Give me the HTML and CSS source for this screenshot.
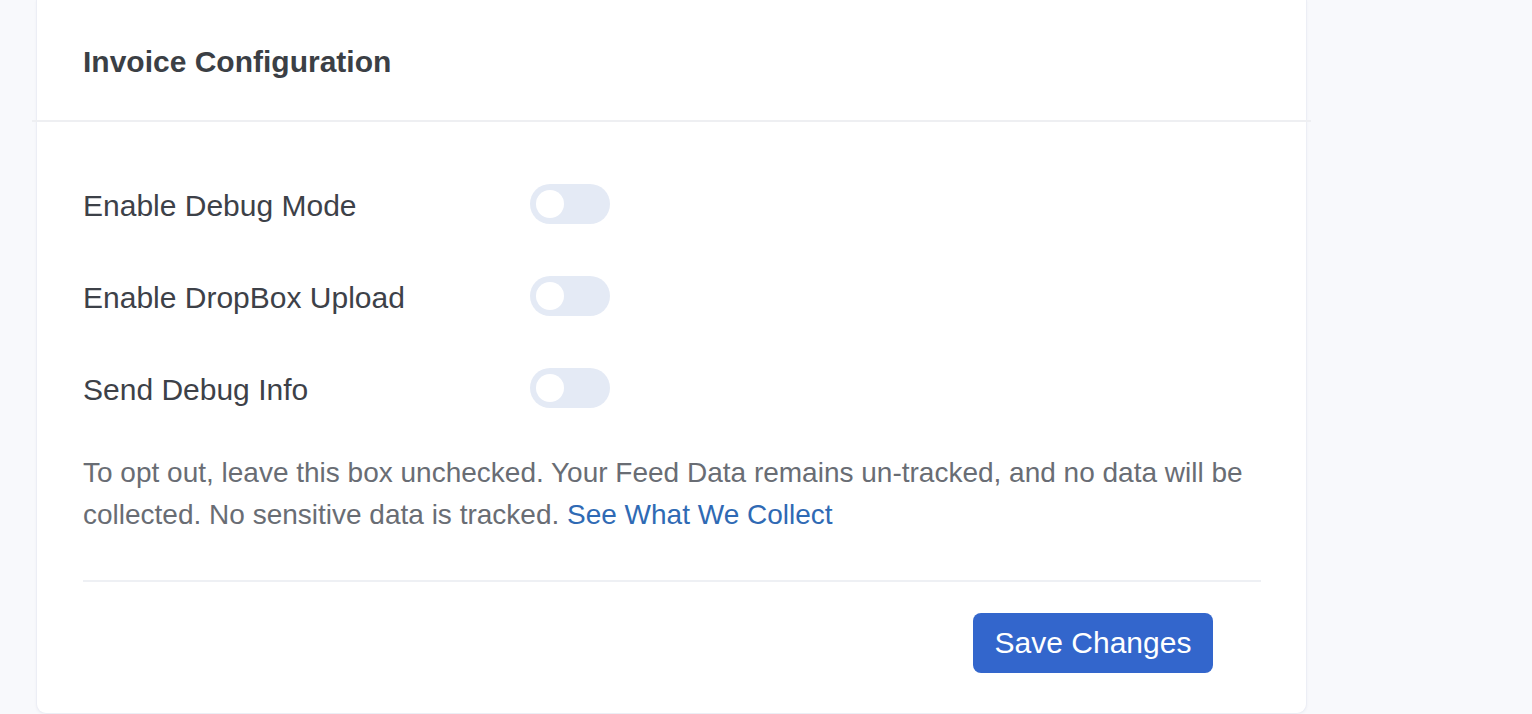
FILE: index.html
```html
<!DOCTYPE html>
<html lang="en">
<head>
<meta charset="utf-8">
<title>Invoice Configuration</title>
<link rel="stylesheet" href="styles.css">
</head>
<body>
<div class="page">
  <section class="card">
    <header class="card-header">
      <h2 class="card-title">Invoice Configuration</h2>
    </header>
    <div class="card-body">
      <div class="settings">
        <div class="setting-row">
          <span class="setting-label">Enable Debug Mode</span>
          <span class="toggle"><span class="knob"></span></span>
        </div>
        <div class="setting-row">
          <span class="setting-label">Enable DropBox Upload</span>
          <span class="toggle"><span class="knob"></span></span>
        </div>
        <div class="setting-row">
          <span class="setting-label">Send Debug Info</span>
          <span class="toggle"><span class="knob"></span></span>
        </div>
      </div>
      <p class="note">To opt out, leave this box unchecked. Your Feed Data remains un-tracked, and no data will be collected. No sensitive data is tracked. <a class="link" href="#">See What We Collect</a></p>
      <div class="footer">
        <button class="btn-primary" type="button">Save Changes</button>
      </div>
    </div>
  </section>
</div>
</body>
</html>
```

FILE: styles.css
```css
html, body {
  margin: 0;
  padding: 0;
  background: #f8f9fc;
  font-family: "Liberation Sans", Arial, Helvetica, sans-serif;
}
.page {
  padding: 0 225px 0 36px;
  height: 714px;
  box-sizing: border-box;
  overflow: hidden;
}
.card {
  background: #ffffff;
  border: 1px solid #eceef5;
  border-top: none;
  border-radius: 0 0 10px 10px;
  box-shadow: 0 1px 3px rgba(30, 40, 80, 0.04);
  height: 714px;
  box-sizing: border-box;
}
.card-header {
  height: 120px;
  display: flex;
  align-items: center;
  border-bottom: 2px solid #eeeff2;
  margin: 0 -5px;
  padding: 0 46px 0 51px;
}
.card-title {
  margin: 0;
  padding-top: 4px;
  font-size: 30px;
  font-weight: 700;
  color: #3b3f45;
  line-height: 36px;
}
.card-body {
  padding: 62px 45px 0 46px;
}
.settings {
  display: flex;
  flex-direction: column;
  gap: 52px;
}
.setting-row {
  display: flex;
  align-items: center;
  height: 40px;
}
.setting-label {
  width: 447px;
  font-size: 30px;
  color: #3d4148;
  line-height: 40px;
  padding-top: 4px;
}
.toggle {
  width: 80px;
  height: 40px;
  border-radius: 20px;
  background: #e4eaf5;
  display: flex;
  align-items: center;
  padding: 0 6px;
  box-sizing: border-box;
}
.knob {
  width: 28px;
  height: 28px;
  border-radius: 50%;
  background: #ffffff;
}
.note {
  margin: 44px 0 0;
  font-size: 28px;
  line-height: 42px;
  color: #696d74;
}
.link {
  color: #2f6ab4;
  text-decoration: none;
}
.footer {
  margin-top: 44px;
  border-top: 2px solid #eef0f4;
  padding: 31px 48px 0 0;
  display: flex;
  justify-content: flex-end;
}
.btn-primary {
  height: 60px;
  width: 240px;
  border: none;
  border-radius: 8px;
  background: #3366cc;
  color: #ffffff;
  font-family: "Liberation Sans", Arial, Helvetica, sans-serif;
  font-size: 30px;
  padding: 0;
}
```
